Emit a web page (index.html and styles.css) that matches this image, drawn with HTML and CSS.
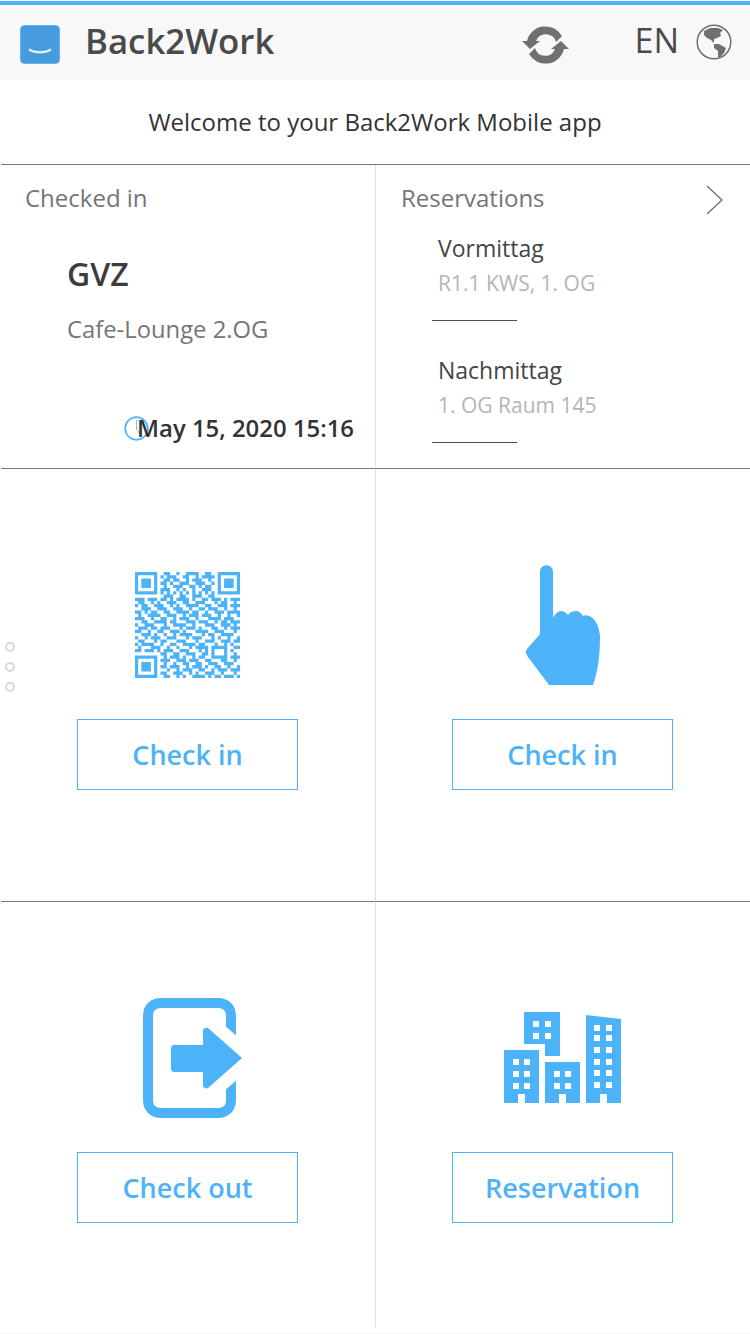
FILE: index.html
```html
<!DOCTYPE html>
<html lang="en">
  <head>
    <meta charset="UTF-8" />
    <meta name="viewport" content="width=device-width, initial-scale=1.0" />
    <title>Back2Work</title>
    <link rel="stylesheet" href="styles.css">
  </head>
  <body>
    <header class="topbar">
      <svg class="logo" width="40" height="39" viewBox="0 0 40 39">
        <rect x="0.5" y="0.5" width="39" height="38" rx="4" fill="#459bdc" stroke="#62b2ee" />
        <path d="M9 24.5c6 3.6 16 3.6 22 0" fill="none" stroke="#dcecf8" stroke-width="2.4" />
      </svg>
      <span class="brand">Back2Work</span>
      <svg class="sync" width="47" height="40" viewBox="0 0 47 40">
        <g fill="#736f6e">
          <path d="M5 16A19 19 0 0 1 40 11L34 17A10.500 10.500 0 0 0 14 16z" />
          <path d="M0 16 8 24 18 16z" />
        </g>
        <g fill="#736f6e" transform="rotate(180 23.500 20)">
          <path d="M5 16A19 19 0 0 1 40 11L34 17A10.500 10.500 0 0 0 14 16z" />
          <path d="M0 16 8 24 18 16z" />
        </g>
      </svg>
      <span class="lang">EN</span>
      <svg class="globe" width="36" height="36" viewBox="0 0 36 36">
        <circle cx="18" cy="18" r="16.800" fill="none" stroke="#736f6e" stroke-width="1.500" />
        <path fill="#736f6e" d="M8 7 14 4 22 4 27 6 24 9 25 12 21 14 18 15 18 19 15 16 11 14 8 11z" />
        <path fill="#736f6e" d="M18 20 23 20 30 24 28 29 24 33 22 33 22 27 18 24z" />
      </svg>
    </header>

    <p class="welcome">Welcome to your Back2Work Mobile app</p>

    <main class="grid">
      <section class="cell info">
        <h2 class="info-title">Checked in</h2>
        <div class="place">GVZ</div>
        <div class="room">Cafe-Lounge 2.OG</div>
        <div class="stamp">
          <svg class="clock" width="25" height="25" viewBox="0 0 25 25">
            <circle cx="12.500" cy="12.500" r="11.300" fill="none" stroke="#4db3f9" stroke-width="1.700" />
            <path d="M12.500 4v9l3.500 5" fill="none" stroke="#4db3f9" stroke-width="0.800" />
          </svg>
          <span class="stamp-text">May 15, 2020 15:16</span>
        </div>
      </section>

      <section class="cell info info-right">
        <div class="info-head">
          <h2 class="info-title">Reservations</h2>
          <svg class="chevron" width="18" height="30" viewBox="0 0 18 30">
            <path d="M1 1l15 14L1 29" fill="none" stroke="#666" stroke-width="1.200" />
          </svg>
        </div>
        <div class="booking">
          <div class="booking-name">Vormittag</div>
          <div class="booking-room">R1.1 KWS, 1. OG</div>
        </div>
        <div class="booking">
          <div class="booking-name">Nachmittag</div>
          <div class="booking-room">1. OG Raum 145</div>
        </div>
      </section>

      <section class="cell action">
        <div class="action-icon">
          <svg width="105" height="106" viewBox="0 0 33 33" preserveAspectRatio="none">
            <path fill="none" stroke="#4db3f9" stroke-width="1.020" d="M0 .5h7M9 .5h2M13 .5h1M16 .5h4M22 .5h2M26 .5h7
              M0 1.500h1M6 1.500h1M8 1.500h1M10 1.500h3M15 1.500h2M19 1.500h1M21 1.500h4M26 1.500h1M32 1.500h1
              M0 2.500h1M2 2.500h3M6 2.500h1M9 2.500h2M12 2.500h2M16 2.500h1M18 2.500h3M23 2.500h1M26 2.500h1M28 2.500h3M32 2.500h1
              M0 3.500h1M2 3.500h3M6 3.500h1M8 3.500h2M11 3.500h1M14 3.500h3M19 3.500h3M24 3.500h1M26 3.500h1M28 3.500h3M32 3.500h1
              M0 4.500h1M2 4.500h3M6 4.500h1M9 4.500h1M12 4.500h3M17 4.500h2M20 4.500h1M22 4.500h2M26 4.500h1M28 4.500h3M32 4.500h1
              M0 5.500h1M6 5.500h1M8 5.500h3M13 5.500h1M15 5.500h1M18 5.500h1M21 5.500h3M26 5.500h1M32 5.500h1
              M0 6.500h7M8 6.500h1M10 6.500h1M12 6.500h1M14 6.500h1M16 6.500h1M18 6.500h1M20 6.500h1M22 6.500h1M24 6.500h1M26 6.500h7
              M9 7.500h3M14 7.500h2M18 7.500h3M23 7.500h2
              M0 8.500h3M4 8.500h3M8 8.500h2M11 8.500h1M13 8.500h4M18 8.500h1M21 8.500h2M24 8.500h3M28 8.500h1M30 8.500h3
              M1 9.500h2M5 9.500h1M7 9.500h1M10 9.500h3M15 9.500h2M19 9.500h3M25 9.500h1M27 9.500h2M31 9.500h1
              M0 10.500h1M2 10.500h2M6 10.500h3M11 10.500h1M13 10.500h1M16 10.500h4M22 10.500h2M26 10.500h3M30 10.500h3
              M2 11.500h3M7 11.500h3M12 11.500h3M17 11.500h1M20 11.500h2M23 11.500h3M28 11.500h1M31 11.500h1
              M0 12.500h2M3 12.500h1M5 12.500h2M9 12.500h2M13 12.500h4M18 12.500h2M22 12.500h1M25 12.500h3M29 12.500h4
              M1 13.500h1M4 13.500h4M10 13.500h3M15 13.500h1M17 13.500h3M21 13.500h3M26 13.500h1M29 13.500h1M32 13.500h1
              M0 14.500h3M5 14.500h1M8 14.500h2M12 14.500h1M14 14.500h3M19 14.500h1M23 14.500h4M28 14.500h3
              M2 15.500h2M6 15.500h4M11 15.500h2M16 15.500h3M20 15.500h3M25 15.500h1M27 15.500h2M30 15.500h3
              M0 16.500h1M3 16.500h3M9 16.500h1M12 16.500h4M18 16.500h1M22 16.500h3M27 16.500h3M31 16.500h1
              M1 17.500h3M5 17.500h2M8 17.500h3M14 17.500h1M16 17.500h3M20 17.500h1M24 17.500h2M28 17.500h1M30 17.500h3
              M0 18.500h2M4 18.500h1M7 18.500h2M11 18.500h3M15 18.500h1M19 18.500h4M25 18.500h3M31 18.500h1
              M2 19.500h3M6 19.500h1M9 19.500h1M12 19.500h1M14 19.500h4M21 19.500h1M23 19.500h2M27 19.500h4
              M0 20.500h1M3 20.500h1M5 20.500h3M10 20.500h3M16 20.500h1M18 20.500h3M24 20.500h1M26 20.500h1M29 20.500h1M32 20.500h1
              M1 21.500h2M6 21.500h1M8 21.500h2M13 21.500h3M19 21.500h1M22 21.500h3M27 21.500h3M31 21.500h2
              M0 22.500h1M2 22.500h4M8 22.500h1M11 22.500h2M15 22.500h4M20 22.500h2M25 22.500h1M28 22.500h1M30 22.500h1
              M1 23.500h1M5 23.500h3M10 23.500h1M13 23.500h1M17 23.500h1M19 23.500h4M24 23.500h5M31 23.500h2
              M0 24.500h2M3 24.500h3M7 24.500h1M9 24.500h3M14 24.500h3M20 24.500h1M22 24.500h1M24 24.500h1M28 24.500h1M30 24.500h1
              M8 25.500h2M12 25.500h2M16 25.500h3M21 25.500h2M24 25.500h1M28 25.500h1M31 25.500h1
              M0 26.500h7M9 26.500h1M11 26.500h3M15 26.500h1M18 26.500h1M20 26.500h2M24 26.500h5M30 26.500h3
              M0 27.500h1M6 27.500h1M8 27.500h3M13 27.500h3M17 27.500h3M22 27.500h2M27 27.500h2M31 27.500h1
              M0 28.500h1M2 28.500h3M6 28.500h1M9 28.500h1M12 28.500h1M15 28.500h2M19 28.500h2M23 28.500h3M28 28.500h3
              M0 29.500h1M2 29.500h3M6 29.500h1M8 29.500h2M11 29.500h3M16 29.500h1M18 29.500h3M22 29.500h1M25 29.500h2M29 29.500h1M32 29.500h1
              M0 30.500h1M2 30.500h3M6 30.500h1M10 30.500h1M13 30.500h1M15 30.500h3M20 30.500h2M24 30.500h1M26 30.500h3M30 30.500h3
              M0 31.500h1M6 31.500h1M8 31.500h2M12 31.500h3M17 31.500h1M19 31.500h1M22 31.500h3M27 31.500h1M31 31.500h1
              M0 32.500h7M9 32.500h2M13 32.500h1M15 32.500h1M18 32.500h4M23 32.500h1M25 32.500h2M28 32.500h3M32 32.500h1" />
          </svg>
        </div>
        <button class="btn">Check in</button>
      </section>

      <section class="cell action">
        <div class="action-icon">
          <svg class="hand-icon" width="74" height="121" viewBox="0 0 74 121">
            <path fill="#4db3f9" d="M14 7c0-9 13-9 13 0v46c2-4 5-7 8-7 3 0 5 2 7 4 2-3 5-4 8-4 3 0 5 2 7 5 2-1 4-1 6 0 6 2 10 10 11 20 0 20-2 35-7 49H23L2 92c-2-3-3-6-1-8l13-15z" />
          </svg>
        </div>
        <button class="btn">Check in</button>
      </section>

      <section class="cell action">
        <div class="action-icon">
          <svg class="exit-icon" width="100" height="121" viewBox="0 0 100 121">
            <path fill="none" stroke="#4db3f9" stroke-width="10" d="M88 48V18C88 10 83 5 75 5H18C10 5 5 10 5 18V102C5 110 10 115 18 115H75C83 115 88 110 88 102V72" />
            <path fill="#4db3f9" stroke="#fff" stroke-width="26" paint-order="stroke" d="M31 47H60V33c0-3 3-4 5-3l34 30-34 30c-2 1-5 0-5-3V74H31c-2 0-3-2-3-4V51c0-2 1-4 3-4z" />
          </svg>
        </div>
        <button class="btn">Check out</button>
      </section>

      <section class="cell action">
        <div class="action-icon">
          <svg width="117" height="92" viewBox="0 0 117 92">
            <path fill="#4db3f9" fill-rule="evenodd" d="M20 0h36v44H41V32H20zM29 9v6h6V9zM41 9v6h6V9zM29 21v6h6v-6zM41 21v6h6v-6z
              M0 38h35v53H21v-9h-7v9H0zM9 47v6h6v-6zM20 47v6h6v-6zM9 59v6h6v-6zM20 59v6h6v-6zM9 71v6h6v-6zM20 71v6h6v-6z
              M41 50h35v41H62v-9h-7v9H41zM50 59v6h6v-6zM61 59v6h6v-6zM50 71v6h6v-6zM61 71v6h6v-6z
              M82 3l35 4v84h-14v-9h-7v9H82zM90 13v6h6v-6zM102 13v6h6v-6zM90 23v6h6v-6zM102 23v6h6v-6zM90 35v6h6v-6zM102 35v6h6v-6zM90 47v6h6v-6zM102 47v6h6v-6zM90 58v6h6v-6zM102 58v6h6v-6zM90 70v6h6v-6zM102 70v6h6v-6z" />
          </svg>
        </div>
        <button class="btn">Reservation</button>
      </section>
    </main>
    <div class="bottom-line"></div>

    <div class="pager">
      <span class="pager-dot"></span>
      <span class="pager-dot"></span>
      <span class="pager-dot"></span>
    </div>
  </body>
</html>
```

FILE: styles.css
```css
* {
  box-sizing: border-box;
}
html,
body {
  margin: 0;
  padding: 0;
  background: #fff;
}
body {
  width: 750px;
  height: 1334px;
  position: relative;
  overflow: hidden;
  font-family: "Open Sans", "Noto Sans", sans-serif;
  color: #333;
}
.topbar {
  display: flex;
  align-items: center;
  height: 79px;
  margin-top: 1px;
  padding: 0 18px 5px 20px;
  border-top: 4px solid #4db3f9;
  background-color: #f8f8f8;
}
.logo {
  margin-top: 9px;
}
.brand {
  margin-left: 25px;
  font-size: 34.800px;
  font-weight: 600;
  color: #4a4a4a;
}
.sync {
  margin-left: auto;
  margin-top: 10px;
}
.lang {
  margin-left: 66px;
  font-size: 34px;
  color: #4a4a4a;
}
.globe {
  margin-left: 17px;
  margin-top: 4px;
}
.welcome {
  height: 84px;
  margin: 0;
  padding-top: 24px;
  text-align: center;
  font-size: 24px;
  line-height: 36px;
  color: #333;
}
.grid {
  display: grid;
  grid-template-columns: 375px 374px;
  grid-template-rows: 304px 433px 425px;
  margin-left: 1px;
  border-top: 1px solid #6b7b84;
}
.cell {
  border-right: 1px solid #ddd;
}
.cell:nth-child(even) {
  border-right: 0;
}
.info {
  padding: 15px 21px 0 24px;
  border-bottom: 1px solid #6b7b84;
}
.info-right {
  padding: 15px 0 0 25px;
}
.info-title {
  margin: 0;
  font-size: 24px;
  line-height: 36px;
  font-weight: 400;
  color: #757575;
}
.info-head {
  display: flex;
  justify-content: space-between;
  align-items: center;
  margin-bottom: 14px;
  padding-right: 26px;
}
.chevron {
  margin-top: 3px;
}
.place {
  margin: 37px 0 0 42px;
  font-size: 32px;
  line-height: 42px;
  font-weight: 600;
  color: #3c3c3c;
}
.room {
  margin: 16px 0 0 42px;
  font-size: 23.800px;
  line-height: 36px;
  color: #757575;
}
.stamp {
  display: flex;
  justify-content: flex-end;
  align-items: center;
  margin-top: 63px;
}
.clock {
  margin-right: -12px;
}
.stamp-text {
  font-size: 23.900px;
  line-height: 36px;
  font-weight: 600;
  color: #333;
}
.booking {
  width: 85px;
  height: 91px;
  margin: 0 0 31px 31px;
  border-bottom: 1px solid #44525a;
}
.booking-name {
  padding-left: 6px;
  font-size: 23px;
  line-height: 36px;
  white-space: nowrap;
  color: #444;
}
.booking-room {
  padding-left: 6px;
  padding-top: 2px;
  font-size: 21px;
  line-height: 30px;
  white-space: nowrap;
  color: #b5b5b5;
}
.action {
  display: flex;
  flex-direction: column;
  align-items: center;
  padding: 86px 1px 0 0;
  border-bottom: 1px solid #6b7b84;
}
.action:nth-last-child(-n + 2) {
  border-bottom: 0;
}
.action-icon {
  display: flex;
  justify-content: center;
  align-items: center;
  height: 140px;
  margin-bottom: 24px;
}
.hand-icon {
  margin-left: 1px;
}
.exit-icon {
  margin-left: 11px;
}
.btn {
  width: 221px;
  height: 71px;
  padding: 0;
  border: 1px solid #4db3f9;
  border-radius: 0;
  background: #fff;
  font-family: inherit;
  font-size: 27px;
  font-weight: 600;
  color: #4db3f9;
}
.bottom-line {
  height: 1px;
  margin-top: 6px;
  background-color: #f3f3f3;
}
.pager {
  position: absolute;
  left: 5px;
  top: 642px;
  display: flex;
  flex-direction: column;
  gap: 10px;
}
.pager-dot {
  width: 10px;
  height: 10px;
  border: 2px solid #d9d9d9;
  border-radius: 50%;
}
```
